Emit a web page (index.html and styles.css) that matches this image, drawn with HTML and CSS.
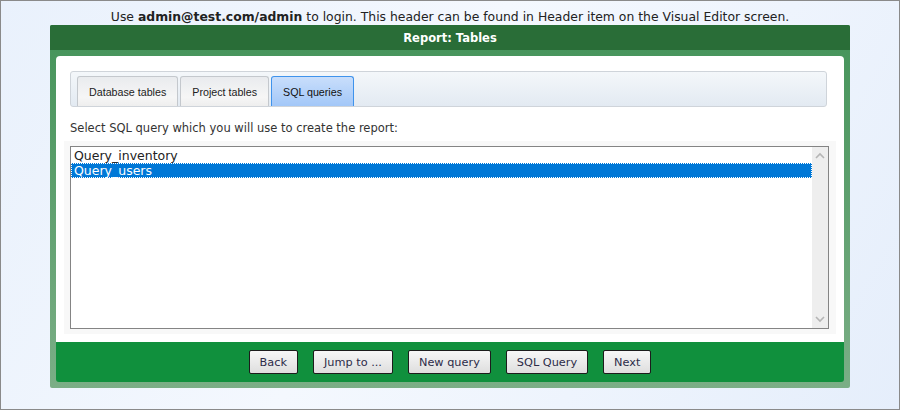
FILE: index.html
```html
<!DOCTYPE html>
<html lang="en">
<head>
    <meta charset="UTF-8">
    <title>Report: Tables</title>
    <link rel="stylesheet" href="styles.css">
</head>
<body>
    <p class="login-note">Use <strong>admin@test.com/admin</strong> to login. This header can be found in Header item on the Visual Editor screen.</p>

    <div class="panel">
        <div class="panel-title">Report: Tables</div>
        <div class="panel-body">
            <div class="tabs">
                <div class="tab">Database tables</div>
                <div class="tab">Project tables</div>
                <div class="tab active">SQL queries</div>
            </div>

            <p class="hint">Select SQL query which you will use to create the report:</p>

            <div class="list-frame">
                <div class="listbox">
                    <div class="items">
                        <div class="item">Query_inventory</div>
                        <div class="item selected">Query_users</div>
                    </div>
                    <div class="scrollbar">
                        <svg width="10" height="7" viewBox="0 0 10 7"><path d="M1 6 L5 2 L9 6" fill="none" stroke="#b5b5b5" stroke-width="1.6"/></svg>
                        <svg width="10" height="7" viewBox="0 0 10 7"><path d="M1 1 L5 5 L9 1" fill="none" stroke="#b5b5b5" stroke-width="1.6"/></svg>
                    </div>
                </div>
            </div>
        </div>
        <div class="panel-foot">
            <button class="btn">Back</button>
            <button class="btn">Jump to ...</button>
            <button class="btn">New query</button>
            <button class="btn">SQL Query</button>
            <button class="btn">Next</button>
        </div>
    </div>
</body>
</html>
```

FILE: styles.css
```css
html, body {
    height: 100%;
}
body {
    margin: 0;
    box-sizing: border-box;
    border: 1px solid #8a8a8a;
    background: linear-gradient(120deg, #e9f1fc 0%, #f4f8fe 45%, #eef4fd 70%, #e5eefb 100%);
    font-family: "DejaVu Sans", Verdana, sans-serif;
    color: #222;
}
.login-note {
    margin: 0;
    padding-top: 7px;
    height: 17px;
    font-size: 12.4px;
    line-height: 17px;
    text-align: center;
}
.panel {
    width: 800px;
    margin: 0 auto;
    box-sizing: border-box;
    padding: 0 6px 6px;
    background: linear-gradient(#449359, #7bae86);
    border-radius: 2px;
}
.panel-title {
    margin: 0 -6px 6px;
    height: 25px;
    line-height: 26px;
    background: #296d37;
    color: #fff;
    font-weight: bold;
    font-size: 11.5px;
    text-align: center;
    border-radius: 2px 2px 0 0;
}
.panel-body {
    height: 286px;
    box-sizing: border-box;
    background: #fff;
    border-radius: 4px 4px 0 0;
    padding: 15px 17px 0 14px;
}
.tabs {
    display: flex;
    gap: 2px;
    height: 30px;
    padding: 4px 0 0 6px;
    border: 1px solid #cfd4da;
    border-radius: 3px;
    background: linear-gradient(#f4f7fa, #e3eaf2);
}
.tab {
    display: flex;
    align-items: center;
    padding: 0 11px;
    border: 1px solid #c4c8cd;
    border-bottom: none;
    border-radius: 3px 3px 0 0;
    background: linear-gradient(#e9ebee, #f6f6f6 70%, #eeeeee);
    font-family: "Liberation Sans", Arial, sans-serif;
    font-size: 10.7px;
    color: #222;
}
.tab.active {
    border-color: #3f93ec;
    background: linear-gradient(#c9defb, #a2c7f8);
    color: #111;
}
.hint {
    margin: 15px 0 0;
    font-size: 11.5px;
    line-height: 13px;
    color: #333;
}
.list-frame {
    margin: 6px -9px 0 -6px;
    padding: 5px 7px 5px 6px;
    background: #f8f8f8;
}
.listbox {
    display: flex;
    height: 183px;
    box-sizing: border-box;
    border: 1px solid #848484;
    background: #fff;
}
.items {
    flex: 1;
    padding-top: 1px;
}
.item {
    padding-left: 3px;
    height: 15px;
    line-height: 15px;
    font-size: 12.5px;
    color: #222;
}
.item.selected {
    background: #0078d7;
    color: #fff;
    outline: 1px dotted #fff;
    outline-offset: -1px;
}
.scrollbar {
    width: 16px;
    background: #eeeeee;
    display: flex;
    flex-direction: column;
    justify-content: space-between;
    align-items: center;
    padding: 5px 0;
}
.panel-foot {
    height: 40px;
    background: #10903d;
    border-radius: 0 0 3px 3px;
    display: flex;
    justify-content: center;
    align-items: flex-start;
    gap: 15px;
    padding-top: 8px;
    box-sizing: border-box;
}
.btn {
    height: 24px;
    padding: 0 10px;
    border: 1px solid #1c1c1c;
    border-radius: 2px;
    background: linear-gradient(#f7f7f7, #dedede);
    font-family: "DejaVu Sans", Verdana, sans-serif;
    font-size: 11.3px;
    color: #2c2b48;
}
```
